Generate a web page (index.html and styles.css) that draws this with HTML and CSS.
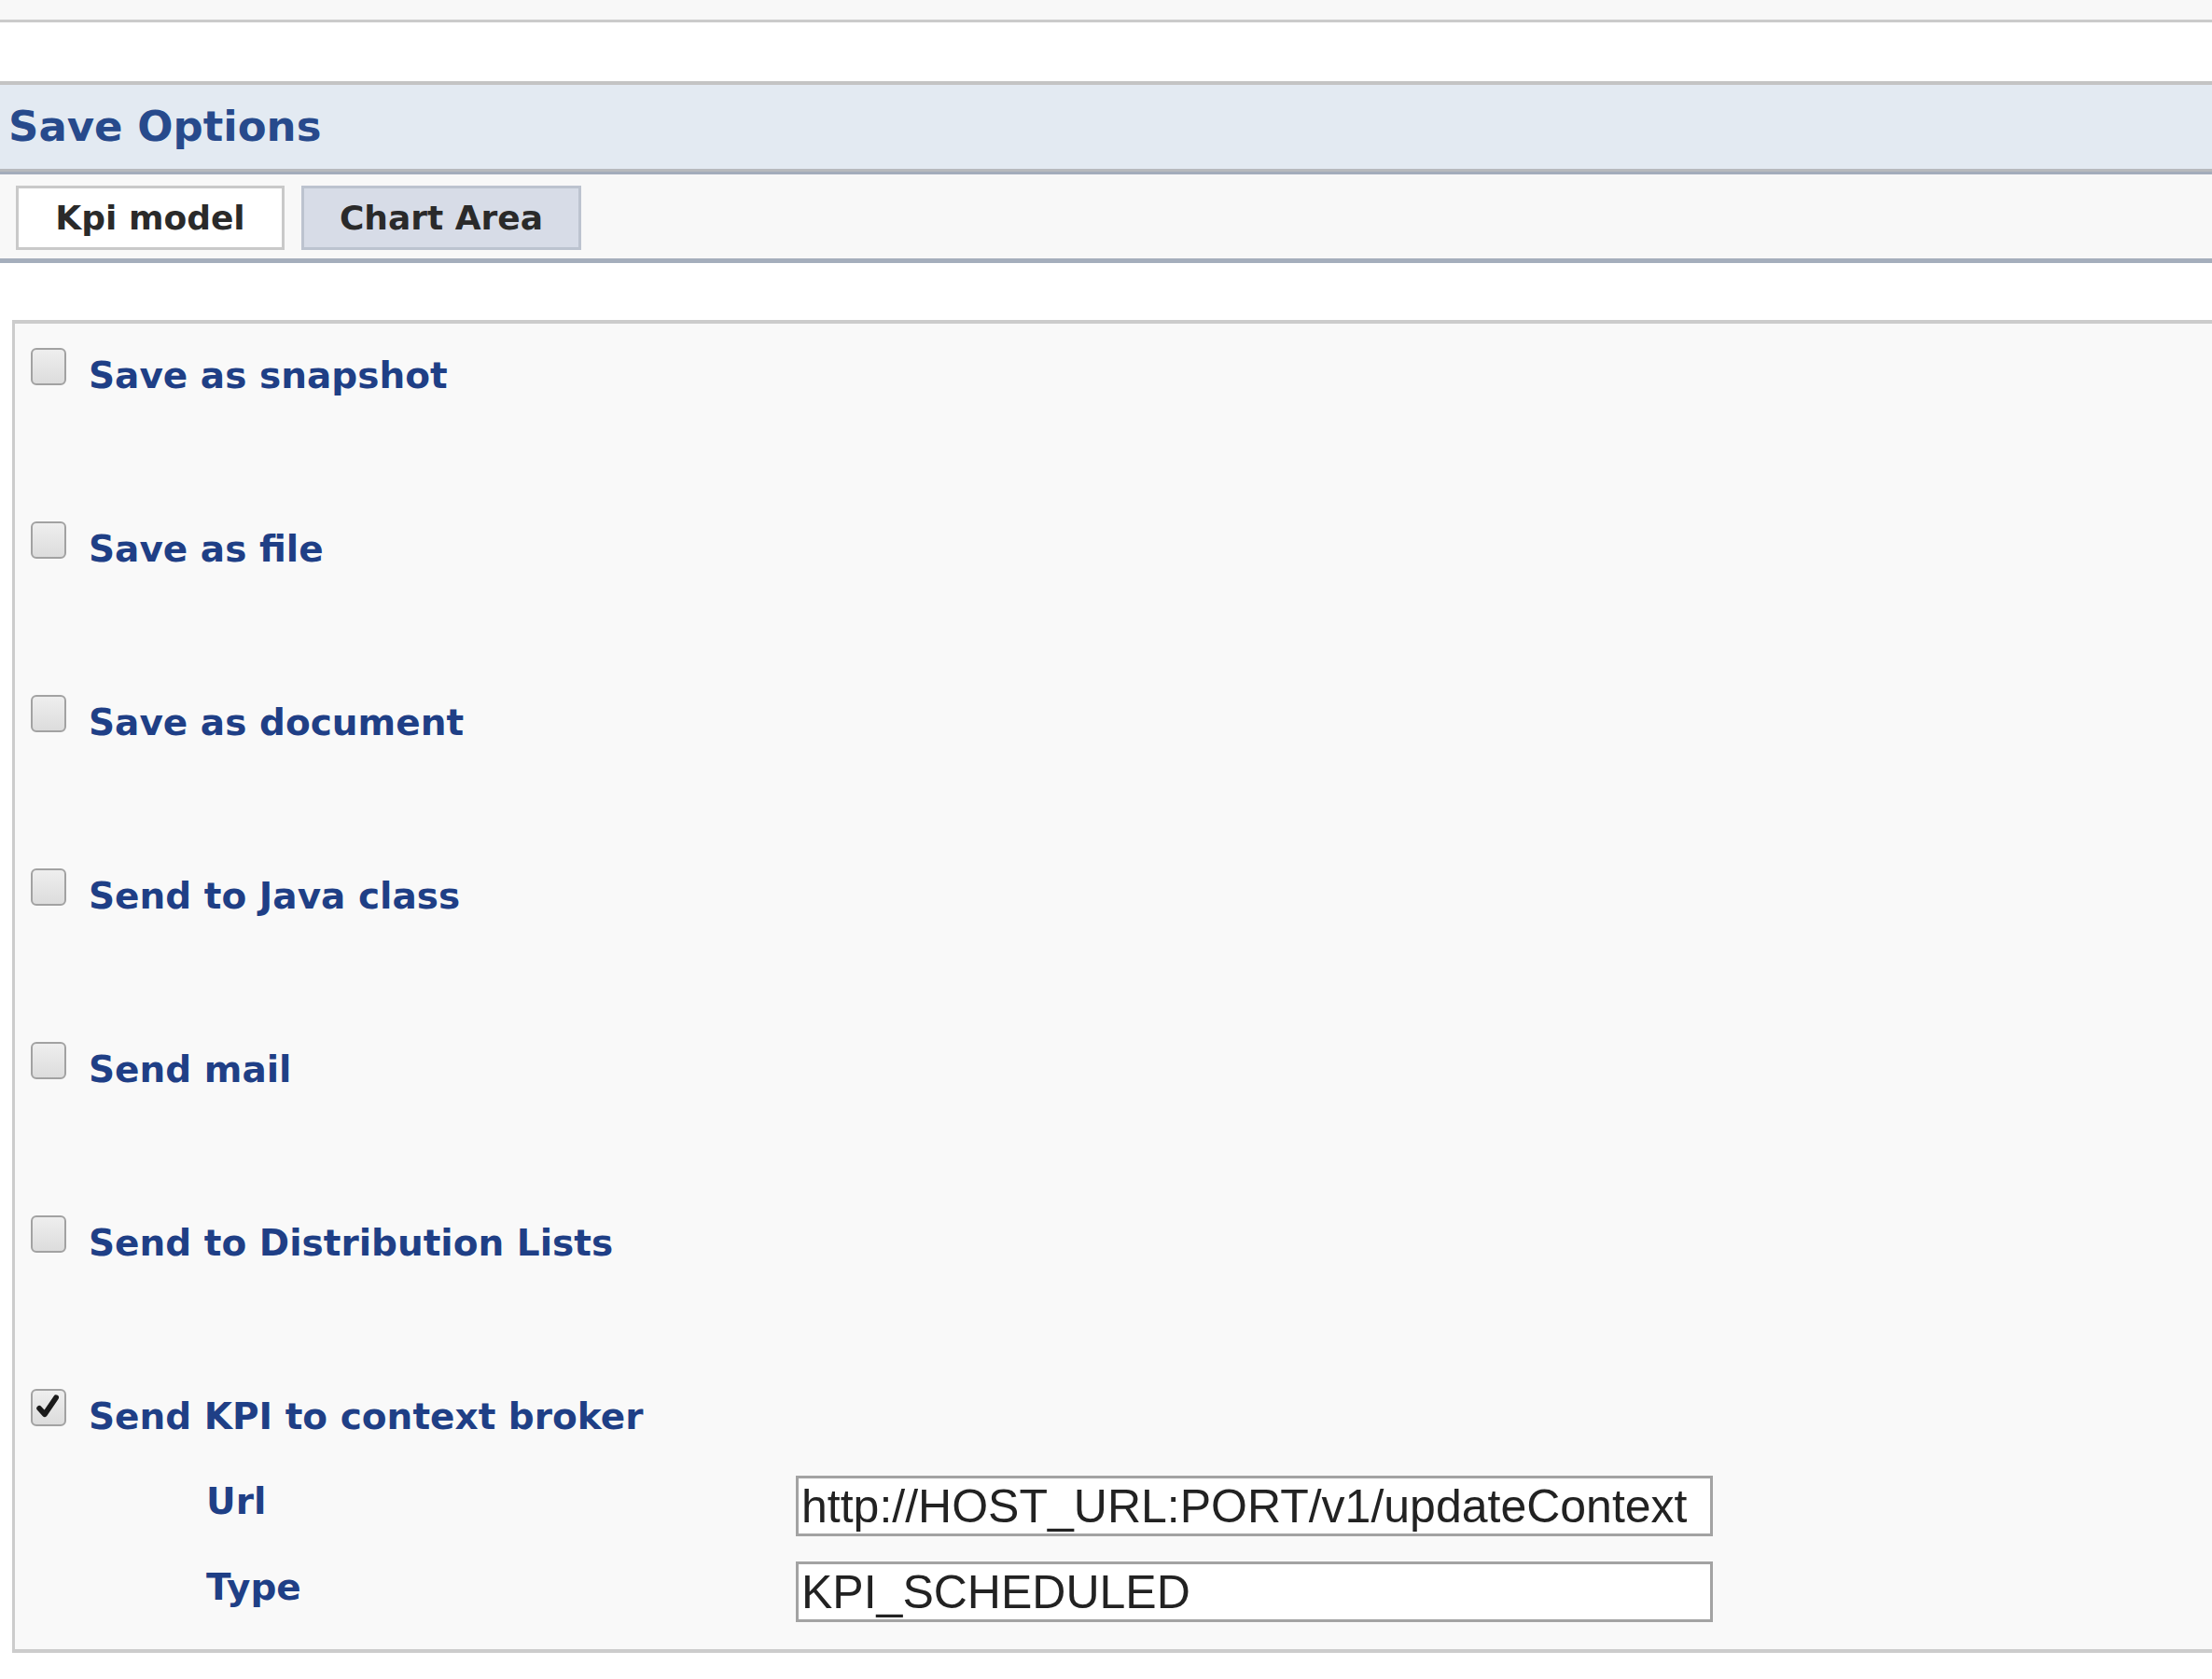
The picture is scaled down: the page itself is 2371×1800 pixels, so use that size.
FILE: index.html
```html
<!DOCTYPE html>
<html lang="en">
<head>
<meta charset="utf-8">
<title>Save Options</title>
<link rel="stylesheet" href="styles.css">
</head>
<body>
<div class="topbar"></div>
<section class="panel">
  <div class="panel-header"><h2 class="panel-title">Save Options</h2></div>
  <div class="tabbar">
    <div class="tab tab-active">Kpi model</div>
    <div class="tab tab-inactive">Chart Area</div>
  </div>
</section>
<div class="options">
  <div class="option"><span class="cb"></span><span class="opt-label">Save as snapshot</span></div>
  <div class="option"><span class="cb"></span><span class="opt-label">Save as file</span></div>
  <div class="option"><span class="cb"></span><span class="opt-label">Save as document</span></div>
  <div class="option"><span class="cb"></span><span class="opt-label">Send to Java class</span></div>
  <div class="option"><span class="cb"></span><span class="opt-label">Send mail</span></div>
  <div class="option"><span class="cb"></span><span class="opt-label">Send to Distribution Lists</span></div>
  <div class="option option-open"><span class="cb cb-checked"><svg viewBox="0 0 38 40" width="34" height="36"><path d="M8 21 L14.5 28 L28 8" fill="none" stroke="#1a1a1a" stroke-width="6.5" stroke-linecap="round" stroke-linejoin="round"/></svg></span><span class="opt-label">Send KPI to context broker</span></div>
  <div class="subform">
    <span class="sub-label">Url</span>
    <input class="field" type="text" value="http://HOST_URL:PORT/v1/updateContext">
    <span class="sub-label">Type</span>
    <input class="field" type="text" value="KPI_SCHEDULED">
  </div>
</div>
</body>
</html>
```
FILE: styles.css
```css
* { box-sizing: border-box; }
body {
  margin: 0;
  background: #ffffff;
  font-family: "DejaVu Sans", Verdana, sans-serif;
}
.topbar {
  height: 24px;
  background: #f8f8f8;
  border-bottom: 3px solid #cbcbcb;
}
.panel {
  margin-top: 63px;
}
.panel-header {
  background: #e3eaf2;
  border-top: 4px solid #c4c4c4;
  border-bottom: 3px solid #b7b9bd;
  height: 97px;
}
.panel-title {
  margin: 0;
  padding-left: 9px;
  font-size: 45px;
  font-weight: bold;
  line-height: 90px;
  color: #274a8c;
}
.tabbar {
  display: flex;
  gap: 18px;
  background: #f8f8f8;
  border-top: 3px solid #a3acbb;
  border-bottom: 5px solid #a5aebc;
  padding: 12px 0 9px 17px;
}
.tab {
  height: 69px;
  font-size: 36px;
  font-weight: bold;
  color: #2a2a2a;
  line-height: 63px;
  text-align: center;
  border: 3px solid #c9c9c9;
}
.tab-active {
  width: 288px;
  background: #ffffff;
}
.tab-inactive {
  width: 300px;
  background: #d7dce7;
  border-color: #bcc3cf;
}
.options {
  margin: 61px 0 0 13px;
  background: #f9f9f9;
  border-top: 4px solid #cccccc;
  border-left: 3px solid #cccccc;
  border-bottom: 4px solid #cccccc;
  padding: 26px 0 29px 17px;
}
.option {
  display: flex;
  align-items: flex-start;
  height: 186px;
}
.option-open {
  height: auto;
}
.cb {
  flex: none;
  width: 38px;
  height: 40px;
  border: 2px solid #a2a2a2;
  border-radius: 6px;
  background: linear-gradient(#eeeeee, #dcdcdc);
  display: flex;
  align-items: center;
  justify-content: center;
}
.opt-label {
  margin-left: 24px;
  padding-top: 7px;
  font-size: 39px;
  font-weight: bold;
  line-height: 46px;
  color: #1f3f86;
}
.subform {
  display: grid;
  grid-template-columns: 632px 983px;
  row-gap: 27px;
  margin-top: 40px;
  padding-left: 188px;
}
.sub-label {
  padding-top: 5px;
  font-size: 39px;
  font-weight: bold;
  line-height: 46px;
  color: #1f3f86;
}
.field {
  width: 983px;
  height: 65px;
  margin: 0;
  padding: 0 3px;
  border: 3px solid #a3a3a3;
  background: #ffffff;
  font-family: "Liberation Sans", Arial, sans-serif;
  font-size: 50px;
  color: #222222;
}
```
